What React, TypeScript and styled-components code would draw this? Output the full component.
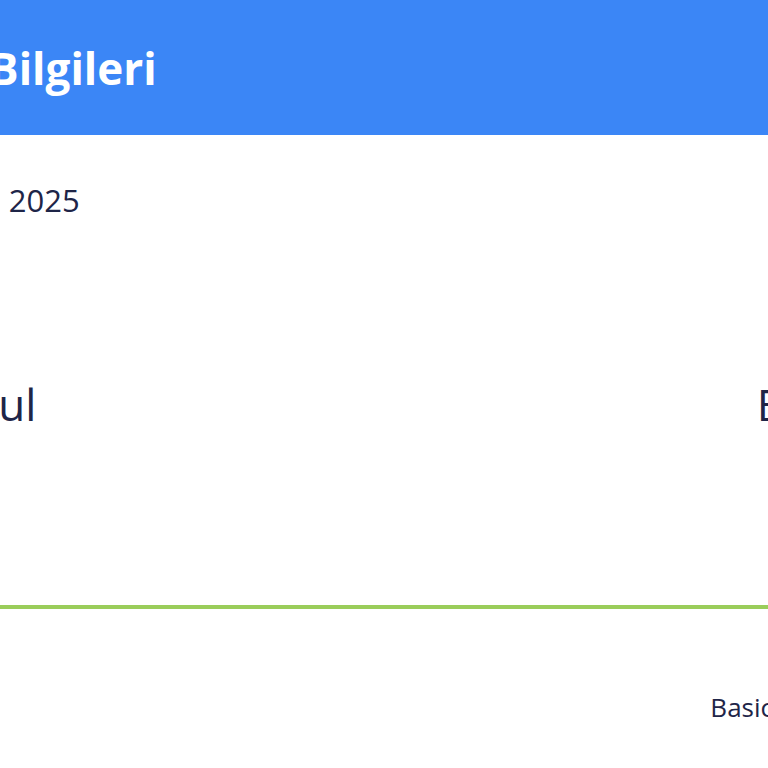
import React from 'react';
import styled, { createGlobalStyle } from 'styled-components';

const GlobalStyle = createGlobalStyle`
  html, body {
    margin: 0;
    padding: 0;
    background: #ffffff;
    overflow: hidden;
  }
  body {
    font-family: 'Open Sans', 'Noto Sans', sans-serif;
    color: #1e2548;
  }
`;

// the ticket is wider than the window; only its middle shows
const Viewport = styled.div`
  width: 768px;
  height: 768px;
  overflow: hidden;
`;

const Sheet = styled.div`
  width: 1020px;
  margin-left: -129px;
  display: flex;
  flex-direction: column;
`;

const Header = styled.header`
  height: 135px;
  background: #3b86f6;
  display: flex;
  align-items: center;
`;

const Title = styled.h1`
  margin: 0;
  font-size: 44px;
  line-height: 1;
  font-weight: 700;
  color: #ffffff;
`;

const Body = styled.main`
  display: flex;
  flex-direction: column;
`;

const DateLine = styled.div`
  margin-top: 50px;
  padding-left: 4px;
  font-size: 31px;
  line-height: 1;
`;

const Route = styled.div`
  margin-top: 166px;
  padding-right: 14px;
  display: flex;
  justify-content: space-between;
  font-size: 44px;
  line-height: 1;
`;

const City = styled.span``;

const PathLine = styled.div`
  margin-top: 179px;
  height: 4px;
  background: #9acd5a;
`;

const Footer = styled.div`
  margin-top: 85px;
  display: flex;
  justify-content: flex-end;
  font-size: 26px;
  line-height: 1;
`;

export default function App() {
  return (
    <Viewport>
      <GlobalStyle />
      <Sheet>
        <Header>
          <Title>Uçuş Bilgileri</Title>
        </Header>
        <Body>
          <DateLine>15 Nisan 2025</DateLine>
          <Route>
            <City>İstanbul</City>
            <City>Berlin</City>
          </Route>
          <PathLine />
          <Footer>Basic Economy</Footer>
        </Body>
      </Sheet>
    </Viewport>
  );
}
